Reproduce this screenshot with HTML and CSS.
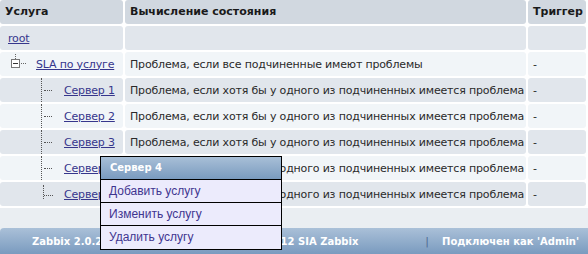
FILE: index.html
```html
<!DOCTYPE html>
<html lang="ru">
<head>
  <meta charset="UTF-8" />
  <title>Услуги IT</title>
  <link rel="stylesheet" href="styles.css">
</head>
<body>
  <table class="services">
    <colgroup>
      <col class="c-name">
      <col class="c-algo">
      <col class="c-trigger">
    </colgroup>
    <thead>
      <tr>
        <th>Услуга</th>
        <th>Вычисление состояния</th>
        <th>Триггер</th>
      </tr>
    </thead>
    <tbody>
      <tr class="odd">
        <td class="name"><a href="#">root</a></td>
        <td></td>
        <td></td>
      </tr>
      <tr class="even">
        <td class="name">
          <div class="tree">
            <svg class="node" width="28" height="24" viewBox="0 0 28 24">
              <line x1="15.5" y1="2" x2="15.5" y2="7" stroke="#666" stroke-dasharray="1 1"/>
              <rect x="11.5" y="7.5" width="8" height="8" fill="#fff" stroke="#777"/>
              <line x1="13" y1="11.5" x2="18" y2="11.5" stroke="#333"/>
              <line x1="21" y1="11.5" x2="26" y2="11.5" stroke="#666" stroke-dasharray="1 1"/>
            </svg>
            <a href="#">SLA по услуге</a>
          </div>
        </td>
        <td>Проблема, если все подчиненные имеют проблемы</td>
        <td>-</td>
      </tr>
      <tr class="odd">
        <td class="name">
          <div class="tree">
            <span class="indent"></span>
            <span class="branch"></span>
            <a href="#">Сервер 1</a>
          </div>
        </td>
        <td>Проблема, если хотя бы у одного из подчиненных имеется проблема</td>
        <td>-</td>
      </tr>
      <tr class="even">
        <td class="name">
          <div class="tree">
            <span class="indent"></span>
            <span class="branch"></span>
            <a href="#">Сервер 2</a>
          </div>
        </td>
        <td>Проблема, если хотя бы у одного из подчиненных имеется проблема</td>
        <td>-</td>
      </tr>
      <tr class="odd">
        <td class="name">
          <div class="tree">
            <span class="indent"></span>
            <span class="branch"></span>
            <a href="#">Сервер 3</a>
          </div>
        </td>
        <td>Проблема, если хотя бы у одного из подчиненных имеется проблема</td>
        <td>-</td>
      </tr>
      <tr class="even">
        <td class="name">
          <div class="tree">
            <span class="indent"></span>
            <span class="branch"></span>
            <a href="#">Сервер 4</a>
          </div>
        </td>
        <td>Проблема, если хотя бы у одного из подчиненных имеется проблема</td>
        <td>-</td>
      </tr>
      <tr class="odd">
        <td class="name">
          <div class="tree">
            <span class="indent"></span>
            <span class="branch last"></span>
            <a href="#">Сервер 5</a>
          </div>
        </td>
        <td>Проблема, если хотя бы у одного из подчиненных имеется проблема</td>
        <td>-</td>
      </tr>
    </tbody>
  </table>

  <div class="footer">
    <span class="copyright">Zabbix 2.0.2 Все права защищены 2001-2012 SIA Zabbix</span>
    <span class="user"><span class="sep">|</span>Подключен как 'Admin'</span>
  </div>

  <div class="menu">
    <div class="menu-title">Сервер 4</div>
    <a class="menu-item" href="#">Добавить услугу</a>
    <a class="menu-item" href="#">Изменить услугу</a>
    <a class="menu-item" href="#">Удалить услугу</a>
  </div>
</body>
</html>
```

FILE: styles.css
```css
* {
  box-sizing: border-box;
}

body {
  margin: 0;
  background-color: #eaeef2;
  font-family: "DejaVu Sans", Verdana, sans-serif;
  font-size: 11px;
  color: #2a2a2a;
  overflow: hidden;
}

a {
  color: #36368c;
}

.services {
  border-collapse: separate;
  border-spacing: 2px;
  background: #fff;
  table-layout: fixed;
  width: 590px;
  margin: -2px 0 0 -2px;
}

.c-name {
  width: 123px;
}

.c-algo {
  width: 401px;
}

.c-trigger {
  width: 58px;
}

th,
td {
  height: 24px;
  padding: 0 5px;
  text-align: left;
  vertical-align: middle;
  white-space: nowrap;
  overflow: hidden;
  border-radius: 3px;
}

td {
  letter-spacing: -0.17px;
}

th {
  background-color: #d1d8e0;
  font-weight: bold;
  color: #1a1a1a;
  padding-bottom: 1px;
}

tr.odd td {
  background-color: #e1e6ec;
}

tr.even td {
  background-color: #f1f5f8;
}

td.name {
  padding: 0 0 0 8px;
}

.tree {
  display: flex;
  align-items: center;
  height: 24px;
  margin-left: -8px;
}

.tree .node {
  flex: none;
  margin-right: 8px;
}

.indent {
  width: 41px;
  flex: none;
}

.branch {
  position: relative;
  width: 23px;
  height: 24px;
  flex: none;
  border-left: 1px dotted #555;
}

.branch::after {
  content: "";
  position: absolute;
  left: 2px;
  top: 12px;
  width: 8px;
  border-top: 1px dotted #555;
}

.branch.last {
  margin-left: 2px;
  width: 21px;
  height: 14px;
  align-self: flex-start;
  margin-top: 3px;
}

.branch.last::after {
  left: 0;
  top: 10px;
  width: 9px;
}

.footer {
  display: flex;
  align-items: center;
  margin-top: 20px;
  height: 28px;
  padding: 0 9px 2px 32px;
  border-top-left-radius: 4px;
  background: linear-gradient(#aac0d8, #7698bd);
  color: #fff;
  font-weight: bold;
  font-size: 10px;
}

.user {
  margin-left: auto;
}

.sep {
  color: #4f6c92;
  font-weight: normal;
  font-size: 11px;
  margin-right: 13px;
}

.menu {
  position: absolute;
  left: 100px;
  top: 156px;
  width: 182px;
  border: 1px solid #000;
  background-color: #ecebfc;
  font-family: "Liberation Sans", Arial, sans-serif;
  font-size: 12px;
}

.menu-title {
  height: 23px;
  padding: 5px 0 0 9px;
  border-bottom: 1px solid #000;
  background: linear-gradient(#a8bfd7, #7a9bbf);
  color: #fff;
  font-weight: bold;
  font-size: 10px;
  font-family: "DejaVu Sans", Verdana, sans-serif;
}

.menu-item {
  display: block;
  height: 23px;
  padding: 4px 0 0 8px;
  border-bottom: 1px solid #000;
  color: #3f3590;
  text-decoration: none;
}

.menu-item:last-child {
  border-bottom: none;
}
```
